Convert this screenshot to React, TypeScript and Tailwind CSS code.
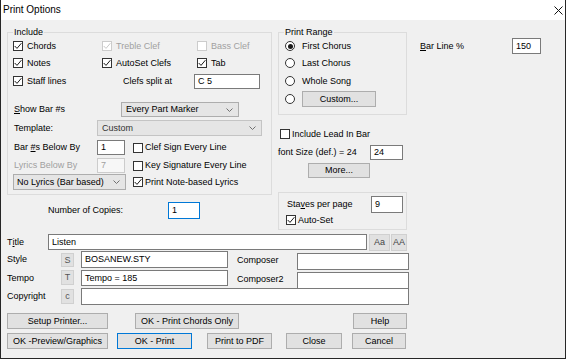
import React from "react";

function Check({ checked = false, disabled = false }: { checked?: boolean; disabled?: boolean }) {
  return (
    <span
      className={`flex w-[10px] h-[10px] shrink-0 items-center justify-center border bg-white ${
        disabled ? "border-[#cccccc]" : "border-[#333333]"
      }`}
    >
      {checked && (
        <svg width="8" height="8" viewBox="0 0 8 8">
          <polyline points="0.7,4 3,6.4 7.4,1.2" fill="none" stroke={disabled ? "#c8c8c8" : "#1a1a1a"} strokeWidth="1" />
        </svg>
      )}
    </span>
  );
}

function Radio({ on = false }: { on?: boolean }) {
  return (
    <span className="flex w-[10px] h-[10px] shrink-0 items-center justify-center rounded-full border border-[#333333] bg-white">
      {on && <span className="w-[5px] h-[5px] rounded-full bg-[#1a1a1a]" />}
    </span>
  );
}

function Chevron() {
  return (
    <svg width="7" height="4" viewBox="0 0 7 4">
      <polyline points="0.5,0.5 3.5,3.5 6.5,0.5" fill="none" stroke="#707070" strokeWidth="1" />
    </svg>
  );
}

function Btn({ label, w, blue = false }: { label: string; w: string; blue?: boolean }) {
  return (
    <div
      className={`${w} h-[16px] flex items-center justify-center bg-[#e1e1e1] border ${
        blue ? "border-[#0078d7]" : "border-[#adadad]"
      }`}
    >
      {label}
    </div>
  );
}

export default function App() {
  return (
    <div className="w-[567px] h-[361px] bg-white text-[9px] leading-none text-black font-['Liberation_Sans',Arial,sans-serif]">
      <div className="w-[566px] h-[359px] flex flex-col border-x border-b border-[#262626]">
        {/* title bar */}
        <div className="h-[20px] flex items-center justify-between bg-white pl-[2px] pr-[2px]">
          <span className="text-[10px]">Print Options</span>
          <svg width="9" height="9" viewBox="0 0 9 9">
            <path d="M0.5 0.5 L8.5 8.5 M8.5 0.5 L0.5 8.5" stroke="#111" strokeWidth="1" />
          </svg>
        </div>

        <div className="flex-1 bg-[#f0f0f0] flex flex-col">
          {/* upper area */}
          <div className="h-[210px] flex">
            {/* left column */}
            <div className="ml-[6px] mt-[6px] w-[265px] flex flex-col">
              <fieldset className="w-[265px] border border-[#dcdcdc] pb-[4px]">
                <legend className="ml-[5px] px-[1px] leading-[12px]">Include</legend>
                <div className="h-[16px] flex items-center pl-[5px]">
                  <div className="w-[89px] flex items-center gap-[4px]">
                    <Check checked /> Chords
                  </div>
                  <div className="w-[95px] flex items-center gap-[4px] text-[#a0a0a0]">
                    <Check checked disabled /> Treble Clef
                  </div>
                  <div className="flex items-center gap-[4px] text-[#a0a0a0]">
                    <Check disabled /> Bass Clef
                  </div>
                </div>
                <div className="h-[18px] flex items-center pl-[5px]">
                  <div className="w-[89px] flex items-center gap-[4px]">
                    <Check checked /> Notes
                  </div>
                  <div className="w-[95px] flex items-center gap-[4px]">
                    <Check checked /> AutoSet Clefs
                  </div>
                  <div className="flex items-center gap-[4px]">
                    <Check checked /> Tab
                  </div>
                </div>
                <div className="h-[18px] flex items-center pl-[5px]">
                  <div className="w-[89px] flex items-center gap-[4px]">
                    <Check checked /> Staff lines
                  </div>
                  <div className="w-[92px] pl-[21px]">Clefs split at</div>
                  <div className="w-[66px] h-[15px] flex items-center pl-[3px] bg-white border border-[#7a7a7a]">C 5</div>
                </div>
                <div className="mt-[12px] h-[15px] flex items-center pl-[6px]">
                  <div className="w-[107px]">
                    <span className="underline">S</span>how Bar #s
                  </div>
                  <div className="w-[118px] h-[15px] flex items-center justify-between pl-[4px] pr-[5px] bg-[#e5e5e5] border border-[#adadad]">
                    Every Part Marker <Chevron />
                  </div>
                </div>
                <div className="mt-[3px] h-[16px] flex items-center pl-[6px]">
                  <div className="w-[83px]">Template:</div>
                  <div className="w-[165px] h-[16px] flex items-center justify-between pl-[4px] pr-[5px] bg-[#e5e5e5] border border-[#c4c4c4] text-[#333]">
                    Custom <Chevron />
                  </div>
                </div>
                <div className="mt-[4px] h-[15px] flex items-center pl-[6px]">
                  <div className="w-[83px]">
                    Bar <span className="underline">#</span>s Below By
                  </div>
                  <div className="w-[28px] h-[15px] flex items-center pl-[3px] bg-white border border-[#7a7a7a]">1</div>
                  <div className="ml-[8px] flex items-center gap-[2px]">
                    <Check /> Clef Sign Every Line
                  </div>
                </div>
                <div className="mt-[3px] h-[15px] flex items-center pl-[6px]">
                  <div className="w-[83px] text-[#a0a0a0]">Lyrics Below By</div>
                  <div className="w-[28px] h-[15px] flex items-center pl-[3px] bg-[#f7f7f7] border border-[#cccccc] text-[#a0a0a0]">7</div>
                  <div className="ml-[8px] flex items-center gap-[2px]">
                    <Check /> Key Signature Every Line
                  </div>
                </div>
                <div className="mt-[1px] h-[16px] flex items-center pl-[5px]">
                  <div className="w-[113px] h-[16px] flex items-center justify-between pl-[3px] pr-[5px] bg-[#e5e5e5] border border-[#adadad]">
                    No Lyrics (Bar based) <Chevron />
                  </div>
                  <div className="ml-[7px] flex items-center gap-[2px]">
                    <Check checked /> Print Note-based Lyrics
                  </div>
                </div>
              </fieldset>
              <div className="mt-[7px] h-[17px] flex items-center pl-[41px]">
                <div className="w-[120px]">Number of Copies:</div>
                <div className="w-[32px] h-[17px] flex items-center pl-[3px] bg-white border border-[#0078d7]">1</div>
              </div>
            </div>

            {/* middle column */}
            <div className="ml-[6px] mt-[6px] w-[129px] flex flex-col">
              <fieldset className="w-[129px] border border-[#dcdcdc] pb-[6px]">
                <legend className="ml-[5px] px-[1px] leading-[12px]">Print Range</legend>
                <div className="h-[16px] flex items-center gap-[7px] pl-[6px]">
                  <Radio on /> First Chorus
                </div>
                <div className="h-[18px] flex items-center gap-[7px] pl-[6px]">
                  <Radio /> Last Chorus
                </div>
                <div className="h-[18px] flex items-center gap-[7px] pl-[6px]">
                  <Radio /> Whole Song
                </div>
                <div className="h-[18px] flex items-center gap-[7px] pl-[6px]">
                  <Radio />
                  <Btn label="Custom..." w="w-[74px]" />
                </div>
              </fieldset>
              <div className="mt-[11px] h-[16px] flex items-center gap-[2px] pl-[2px]">
                <Check /> Include Lead In Bar
              </div>
              <div className="mt-[2px] h-[16px] flex items-center">
                <div className="w-[92px]">font Size (def.) = 24</div>
                <div className="w-[33px] h-[15px] flex items-center pl-[3px] bg-white border border-[#7a7a7a]">24</div>
              </div>
              <div className="mt-[3px] ml-[30px] w-[62px] h-[15px] flex items-center justify-center bg-[#e1e1e1] border border-[#adadad]">
                More...
              </div>
              <div className="mt-[14px] w-[129px] h-[38px] border border-[#dcdcdc] flex flex-col">
                <div className="mt-[3px] h-[17px] flex items-center pl-[8px]">
                  <div className="w-[84px]">
                    Sta<span className="underline">v</span>es per page
                  </div>
                  <div className="w-[32px] h-[17px] flex items-center pl-[3px] bg-white border border-[#7a7a7a]">9</div>
                </div>
                <div className="mt-[2px] h-[10px] flex items-center gap-[2px] pl-[7px]">
                  <Check checked /> Auto-Set
                </div>
              </div>
            </div>

            {/* right column */}
            <div className="ml-[13px] mt-[18px] h-[16px] flex items-center">
              <div className="w-[92px]">
                <span className="underline">B</span>ar Line %
              </div>
              <div className="w-[29px] h-[16px] flex items-center pl-[3px] bg-white border border-[#7a7a7a]">150</div>
            </div>
          </div>

          {/* lower area */}
          <div className="mt-[4px] h-[16px] flex items-start pl-[6px]">
            <div className="w-[41px] h-[16px] flex items-center">
              T<span className="underline">i</span>tle
            </div>
            <div className="w-[319px] h-[16px] flex items-center pl-[3px] bg-white border border-[#7a7a7a]">Listen</div>
            <div className="ml-[2px] w-[21px] h-[17px] flex items-center justify-center bg-[#e1e1e1] border border-[#d0d0d0] text-[#444]">Aa</div>
            <div className="ml-[1px] w-[16px] h-[17px] flex items-center justify-center bg-[#e1e1e1] border border-[#d0d0d0] text-[#444]">AA</div>
          </div>
          <div className="mt-[1px] h-[17px] flex items-start pl-[6px]">
            <div className="w-[54px] h-[17px] flex items-center">Style</div>
            <div className="mt-[2px] w-[13px] h-[14px] flex items-center justify-center bg-[#e1e1e1] border border-[#d0d0d0] text-[#555]">S</div>
            <div className="ml-[7px] w-[147px] h-[17px] flex items-center pl-[3px] bg-white border border-[#7a7a7a]">BOSANEW.STY</div>
            <div className="ml-[9px] w-[60px] h-[19px] flex items-center">Composer</div>
            <div className="mt-[2px] w-[112px] h-[17px] bg-white border border-[#7a7a7a]" />
          </div>
          <div className="mt-[2px] h-[17px] flex items-start pl-[6px]">
            <div className="w-[54px] h-[16px] flex items-center">Tempo</div>
            <div className="w-[13px] h-[15px] flex items-center justify-center bg-[#e1e1e1] border border-[#d0d0d0] text-[#555]">T</div>
            <div className="ml-[7px] w-[147px] h-[16px] flex items-center pl-[3px] bg-white border border-[#7a7a7a]">Tempo = 185</div>
            <div className="ml-[9px] w-[60px] h-[19px] flex items-center">Composer2</div>
            <div className="mt-[2px] w-[112px] h-[17px] bg-white border border-[#7a7a7a]" />
          </div>
          <div className="mt-[1px] h-[17px] flex items-start pl-[6px]">
            <div className="w-[54px] h-[17px] flex items-center">Copyright</div>
            <div className="mt-[1px] w-[13px] h-[15px] flex items-center justify-center bg-[#e1e1e1] border border-[#d0d0d0] text-[#555]">c</div>
            <div className="ml-[7px] w-[328px] h-[17px] bg-white border border-[#7a7a7a]" />
          </div>

          <div className="mt-[8px] h-[16px] flex pl-[6px]">
            <Btn label="Setup Printer..." w="w-[101px]" />
            <div className="ml-[27px]">
              <Btn label="OK - Print Chords Only" w="w-[104px]" />
            </div>
            <div className="ml-[114px]">
              <Btn label="Help" w="w-[54px]" />
            </div>
          </div>
          <div className="mt-[4px] h-[16px] flex pl-[6px]">
            <Btn label="OK -Preview/Graphics" w="w-[101px]" />
            <div className="ml-[9px]">
              <Btn label="OK - Print" w="w-[75px]" blue />
            </div>
            <div className="ml-[15px]">
              <Btn label="Print to PDF" w="w-[65px]" />
            </div>
            <div className="ml-[14px]">
              <Btn label="Close" w="w-[56px]" />
            </div>
            <div className="ml-[10px]">
              <Btn label="Cancel" w="w-[54px]" />
            </div>
          </div>
        </div>
      </div>
    </div>
  );
}
